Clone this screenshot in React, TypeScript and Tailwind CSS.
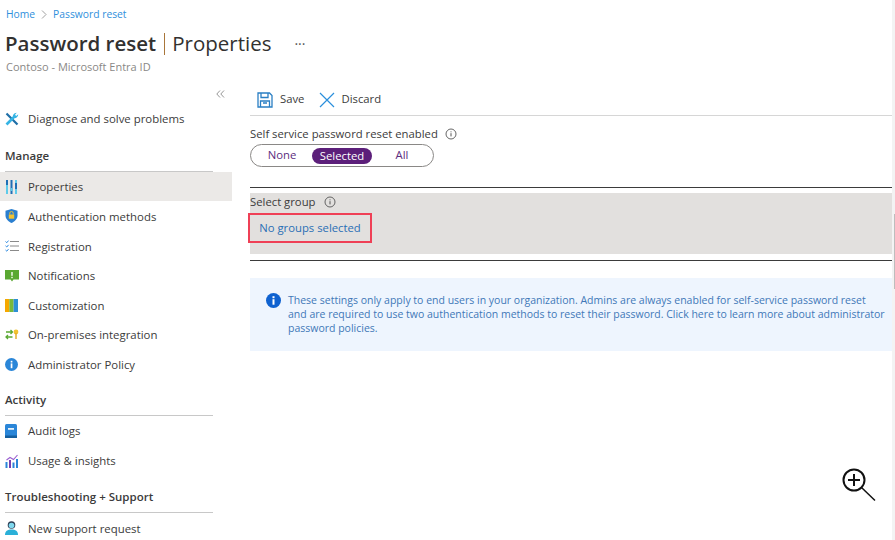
import type { ReactNode } from "react";

const font = { fontFamily: '"Open Sans", "Noto Sans", sans-serif' };

function InfoDot() {
  return (
    <svg width="12" height="12" viewBox="0 0 12 12" fill="none" stroke="#555" className="shrink-0">
      <circle cx="6" cy="6" r="5" strokeWidth="0.9" />
      <path d="M6 5.2v3.2M6 3.4v.9" strokeWidth="1" />
    </svg>
  );
}

const icons: Record<string, ReactNode> = {
  wrench: (
    <svg width="14" height="14" viewBox="0 0 14 14" fill="none">
      <path d="M1.500 1.500L12.500 12.500" stroke="#1f6fa8" strokeWidth="2.200" />
      <path d="M1.500 12.500L8.500 5.500" stroke="#35b4e4" strokeWidth="2.600" />
      <path d="M8 6c-.8-2.500.8-5 3.800-5.200L10 2.800l1.200 1.200 2-1.700C13.300 5 10.800 7 8 6z" fill="#35b4e4" />
    </svg>
  ),
  properties: (
    <svg width="13" height="14" viewBox="0 0 13 14">
      <rect x="1" y="0" width="2" height="14" fill="#5ecbea" />
      <rect x="1" y="0" width="2" height="5" fill="#1f6fb5" />
      <rect x="5.500" y="0" width="2" height="14" fill="#1f6fb5" />
      <rect x="5.500" y="8" width="2" height="3" fill="#5ecbea" />
      <rect x="10" y="0" width="2" height="14" fill="#5ecbea" />
      <rect x="10" y="3" width="2" height="6" fill="#1f6fb5" />
    </svg>
  ),
  shield: (
    <svg width="13" height="14" viewBox="0 0 13 14">
      <path d="M6.500 0l6 1.800v4.700c0 3.500-3 6-6 7.500-3-1.500-6-4-6-7.500V1.800z" fill="#2a7fd0" />
      <rect x="3.800" y="5.500" width="5.400" height="4.200" fill="#f2c230" />
      <path d="M4.800 5.500V4.200a1.700 1.700 0 013.400 0v1.300" fill="none" stroke="#f2c230" strokeWidth="1" />
    </svg>
  ),
  registration: (
    <svg width="14" height="12" viewBox="0 0 14 12" fill="none">
      <path d="M.5 1.500l1.300 1.200L3.500.6M.5 5.800l1.300 1.200 1.700-2.100M.5 10l1.300 1.200 1.700-2.100" stroke="#2f8be0" strokeWidth="1" />
      <path d="M5 1.500h9M5 6h9M5 10.500h9" stroke="#8a8a8a" strokeWidth="1" />
    </svg>
  ),
  notifications: (
    <svg width="14" height="12" viewBox="0 0 14 12">
      <path d="M0 0h14v9.500H8.500L7 11.500 5.500 9.500H0z" fill="#5aa832" />
      <rect x="6.200" y="2" width="1.600" height="3.800" fill="#e6f3dc" />
      <rect x="6.200" y="6.800" width="1.600" height="1.400" fill="#e6f3dc" />
    </svg>
  ),
  customization: (
    <svg width="13" height="13" viewBox="0 0 13 13">
      <rect width="4.300" height="13" fill="#f5a800" />
      <rect x="4.300" width="4.300" height="13" fill="#79b83b" />
      <rect x="8.600" width="4.400" height="13" fill="#2d8fd5" />
    </svg>
  ),
  onprem: (
    <svg width="14" height="11" viewBox="0 0 14 11" fill="none">
      <path d="M1 3h6.500M5.500 1l2 2-2 2M7.500 8H1M3 6L1 8l2 2" stroke="#5aa832" strokeWidth="1.300" />
      <circle cx="11" cy="3" r="2.400" fill="#f2c230" />
      <rect x="10.300" y="4" width="1.400" height="6" fill="#e0a820" />
    </svg>
  ),
  info: (
    <svg width="13" height="13" viewBox="0 0 13 13">
      <circle cx="6.500" cy="6.500" r="6.500" fill="#2a86d8" />
      <rect x="5.700" y="5.400" width="1.700" height="4.800" fill="#fff" />
      <rect x="5.700" y="2.800" width="1.700" height="1.700" fill="#fff" />
    </svg>
  ),
  audit: (
    <svg width="12" height="14" viewBox="0 0 12 14">
      <rect width="12" height="14" rx="1.500" fill="#2a86d8" />
      <rect x="0" y="11.500" width="12" height="2.500" fill="#155f9e" />
      <rect x="3" y="4" width="6" height="1.800" fill="#e4f1fb" />
    </svg>
  ),
  usage: (
    <svg width="14" height="14" viewBox="0 0 14 14">
      <rect x="0.500" y="8" width="2" height="6" fill="#2a86d8" />
      <rect x="4" y="6" width="2" height="8" fill="#7a3fb0" />
      <rect x="7.500" y="8.500" width="2" height="5.500" fill="#2a86d8" />
      <rect x="11" y="5" width="2" height="9" fill="#2a86d8" />
      <path d="M1.500 6L5 3.500l3.500 2L12.500 1" fill="none" stroke="#9a5fd0" strokeWidth="1.100" />
    </svg>
  ),
  support: (
    <svg width="13" height="14" viewBox="0 0 13 14">
      <circle cx="6.500" cy="4" r="3.800" fill="#2d3e55" />
      <circle cx="6.500" cy="4.500" r="2.800" fill="#7fd8ee" />
      <path d="M0 14c0-4 2.500-5.500 6.500-5.500S13 10 13 14z" fill="#2ab0d8" />
    </svg>
  ),
};

function NavItem({ icon, label, active }: { icon: string; label: string; active?: boolean }) {
  return (
    <div className={`flex h-[29.6px] items-center pl-[5px] text-[11.400px] text-[#3b3b3b] ${active ? "bg-[#ebe9e7]" : ""}`}>
      <span className="flex w-[23px] shrink-0 items-center pt-[1px]">{icons[icon]}</span>
      <span className="pt-[1px]">{label}</span>
    </div>
  );
}

function NavHeading({ children }: { children: ReactNode }) {
  return (
    <div className="mr-[19px] ml-[5px] flex h-[29px] items-center border-b border-[#c8c8c8] pb-[2px] text-[11.500px] font-semibold text-[#3b3b3b]">
      {children}
    </div>
  );
}

export default function App() {
  return (
    <div className="relative h-[540px] w-[895px] overflow-hidden bg-white text-[#323130]" style={font}>
      <div className="flex h-[28px] items-center gap-[6px] pl-[6px] pt-[1px] text-[10.300px] text-[#2f8fdc]">
        <span>Home</span>
        <svg width="6" height="9" viewBox="0 0 6 9" fill="none" stroke="#888" strokeWidth="0.800">
          <path d="M1 .5l4 4-4 4" />
        </svg>
        <span>Password reset</span>
      </div>

      <div className="flex h-[31px] items-center pl-[5px] text-[20.500px] leading-none text-[#323130]">
        <span className="font-semibold">Password reset</span>
        <span className="mx-[7.500px] h-[22px] w-px bg-[#a9763a]" />
        <span>Properties</span>
        <span className="ml-[23px] text-[14px] text-[#555]">···</span>
      </div>
      <div className="flex h-[17px] items-center pl-[6px] text-[11px] text-[#8a8886]">
        Contoso - Microsoft Entra ID
      </div>

      <div className="flex">
        <aside className="w-[232px] shrink-0">
          <div className="flex h-[27.500px] items-start justify-end pr-[7px] pt-[14px]">
            <svg width="9" height="8" viewBox="0 0 9 8" fill="none" stroke="#8a8a8a" strokeWidth="0.900">
              <path d="M4 .5L.8 4 4 7.500M8 .5L4.800 4 8 7.500" />
            </svg>
          </div>
          <NavItem icon="wrench" label="Diagnose and solve problems" />
          <div className="mt-[9.500px]">
            <NavHeading>Manage</NavHeading>
          </div>
          <NavItem icon="properties" label="Properties" active />
          <NavItem icon="shield" label="Authentication methods" />
          <NavItem icon="registration" label="Registration" />
          <NavItem icon="notifications" label="Notifications" />
          <NavItem icon="customization" label="Customization" />
          <NavItem icon="onprem" label="On-premises integration" />
          <NavItem icon="info" label="Administrator Policy" />
          <div className="mt-[8px]">
            <NavHeading>Activity</NavHeading>
          </div>
          <NavItem icon="audit" label="Audit logs" />
          <NavItem icon="usage" label="Usage & insights" />
          <div className="mt-[9px]">
            <NavHeading>Troubleshooting + Support</NavHeading>
          </div>
          <NavItem icon="support" label="New support request" />
        </aside>

        <main className="ml-[18px] flex-1 pt-[8px] pr-[3px] text-[11.300px]">
          <div className="flex h-[32px] items-center border-b border-[#d6d6d6] pl-[7px] text-[#3b3b3b]">
            <svg width="16" height="16" viewBox="0 0 16 16" fill="none" stroke="#2a7fc4" strokeWidth="1.300">
              <path d="M1 1h11.500L15 3.500V15H1z" />
              <path d="M4 1v4.500h7V1M3.500 15V9h9v6M6 11h4" />
            </svg>
            <span className="ml-[7px]">Save</span>
            <svg className="ml-[15px]" width="16" height="16" viewBox="0 0 16 16" fill="none" stroke="#2a8fdc" strokeWidth="1.200">
              <path d="M1 1l14 14M15 1L1 15" />
            </svg>
            <span className="ml-[6px]">Discard</span>
          </div>

          <div className="mt-[11px] flex items-center gap-[7px] leading-[14px] text-[#3b3b3b]">
            Self service password reset enabled
            <InfoDot />
          </div>
          <div className="mt-[3px] flex h-[23px] w-[184px] items-center rounded-full border border-[#8a8886] px-[1px] text-[#5c2d7e]">
            <span className="w-[60px] text-center">None</span>
            <span className="w-[60px] rounded-full bg-[#5c1f7a] text-center leading-[16px] text-white">Selected</span>
            <span className="w-[60px] text-center">All</span>
          </div>

          <div className="mt-[20px] border-t border-[#3b3b3b]" />
          <div className="mt-[5px] h-[61px] bg-[#e2e0de] text-[#3b3b3b]">
            <div className="flex items-center gap-[8px] pt-[1px] leading-[16px]">
              Select group
              <InfoDot />
            </div>
            <div className="mt-[3px] -ml-[2px] flex h-[30px] w-[124px] items-center justify-center border-2 border-[#ef4056] text-[#2a6fb5]">
              No groups selected
            </div>
          </div>
          <div className="mt-[6px] border-t border-[#3b3b3b]" />

          <div className="mt-[17px] flex h-[73px] gap-[7px] bg-[#eef5fe] pt-[15px] pl-[16px] text-[10.500px] leading-[14px] text-[#3f78b8]">
            <svg className="shrink-0" width="15" height="15" viewBox="0 0 15 15">
              <circle cx="7.500" cy="7.500" r="7.500" fill="#0f62d0" />
              <rect x="6.500" y="6.200" width="2" height="5.500" fill="#fff" />
              <rect x="6.500" y="3.200" width="2" height="2" fill="#fff" />
            </svg>
            <p className="w-[598px]">
              These settings only apply to end users in your organization. Admins are always enabled for self-service
              password reset and are required to use two authentication methods to reset their password. Click here to
              learn more about administrator password policies.
            </p>
          </div>
        </main>
      </div>

      {/* scrollbar track and thumb */}
      <div className="absolute top-0 right-0 h-full w-[3px] bg-[#f3f3f3]">
        <div className="absolute top-[214px] right-0 h-[75px] w-[1px] bg-[#bdbdbd]" />
      </div>

      {/* zoom cursor sits over the page */}
      <svg className="absolute top-[468px] left-[842px]" width="34" height="34" viewBox="0 0 34 34" fill="none" stroke="#111">
        <circle cx="12" cy="12" r="10.500" strokeWidth="2" />
        <path d="M12 6v12M6 12h12" strokeWidth="2" />
        <path d="M19.500 19.500L33 32.500" strokeWidth="1.500" />
      </svg>
    </div>
  );
}
